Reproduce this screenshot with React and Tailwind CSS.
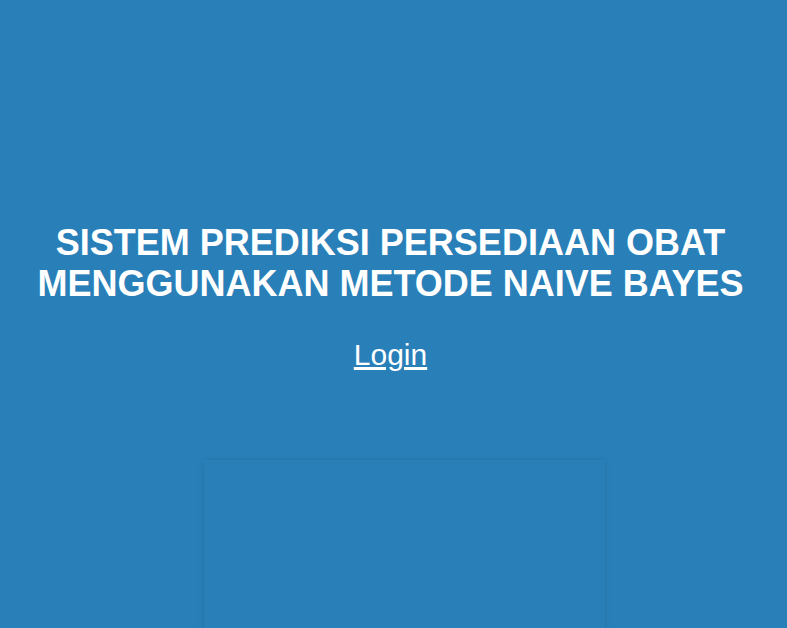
export default function App() {
  return (
    <div className="min-h-[628px] h-[628px] bg-[#2980b9] font-['Liberation_Sans',Arial,sans-serif] text-white overflow-hidden">
      <div className="pt-[222px] flex flex-col">
        <h1 className="text-[36px] leading-[41.4px] font-bold text-center pr-[6px]">
          SISTEM PREDIKSI PERSEDIAAN OBAT
          <br />
          MENGGUNAKAN METODE NAIVE BAYES
        </h1>
        <div className="mt-[33px] pr-[6px] text-center text-[30px] leading-[34.5px]">
          <a href="#" className="underline">
            Login
          </a>
        </div>
        <div className="mt-[88px] ml-[204px] w-[401px] h-[300px] bg-[#2980b9] shadow-[0_0_6px_rgba(0,0,0,0.12)]" />
      </div>
    </div>
  );
}
